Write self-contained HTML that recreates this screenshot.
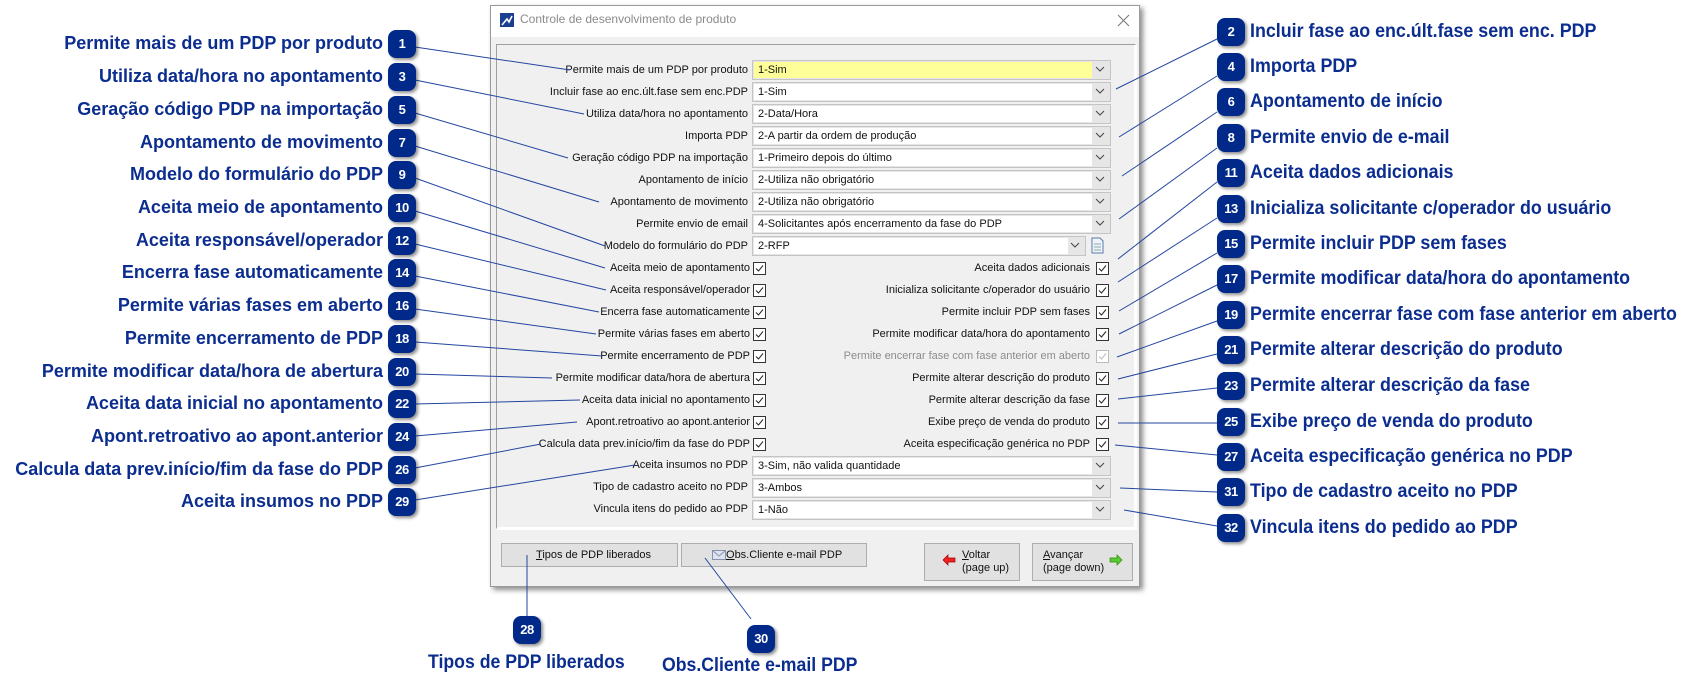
<!DOCTYPE html>
<html><head><meta charset="utf-8"><style>
*{margin:0;padding:0;box-sizing:border-box}
body{width:1706px;height:694px;background:#fff;position:relative;overflow:hidden;font-family:"Liberation Sans",sans-serif}
.a{position:absolute}
.dlg{left:490px;top:5px;width:650px;height:582px;background:#f0f0f0;border:1px solid #9a9a9a;box-shadow:3px 3px 5px rgba(0,0,0,.45)}
.tb{left:491px;top:6px;width:648px;height:31px;background:#fff}
.pn{left:496px;top:44px;width:640px;height:485px;border:1px solid #a0a0a0;border-right-color:#fff;border-bottom-color:#fff;box-shadow:inset -1px -1px 0 #fff, 1px 1px 0 #fff}
.l{position:absolute;right:958px;font-size:11px;color:#111;white-space:nowrap;line-height:14px}
.r{position:absolute;right:616px;font-size:11px;color:#111;white-space:nowrap;line-height:14px}
.cb{position:absolute;left:752px;width:359px;height:20px;background:#e6e6e6;border:1px solid #c4c4c4}
.cb .f{position:absolute;left:1px;top:1px;width:338px;height:16px;background:#fff;font-size:11px;line-height:16px;padding-left:4px;color:#111;white-space:nowrap}
.cb .ar{position:absolute;right:5px;top:3px;width:10px;height:10px}
.bd{position:absolute;width:28px;height:28px;border-radius:8px;background:#00298a;color:#fff;font-weight:bold;font-size:13px;line-height:28px;text-align:center;box-shadow:2px 2px 3px rgba(0,0,0,.45);font-family:"Liberation Sans Narrow","Liberation Sans",sans-serif;letter-spacing:-.5px}
.lt{position:absolute;right:1323px;font-weight:bold;font-size:18px;color:#0b2d8f;white-space:nowrap;line-height:20px}
.rt{position:absolute;left:1250px;font-weight:bold;font-size:19px;color:#0b2d8f;white-space:nowrap;line-height:22px;transform:scaleX(.94);transform-origin:left center}
.bt{position:absolute;background:#e1e1e1;border:1px solid #adadad;font-size:11px;color:#111}
</style></head><body>

<div class="a dlg"></div>
<div class="a tb"></div>
<svg class="a" style="left:500px;top:13px" width="14" height="14"><rect width="14" height="14" fill="#1b3f8f"/><path d="M2 12 L7 6 L9 9 L12 3" stroke="#fff" stroke-width="1.6" fill="none"/></svg>
<div class="a" style="left:520px;top:12px;font-size:12px;color:#8a8a8a">Controle de desenvolvimento de produto</div>
<svg class="a" style="left:1117px;top:14px" width="13" height="13"><path d="M1 1L12 12M12 1L1 12" stroke="#777" stroke-width="1"/></svg>
<div class="a pn"></div>

<div class="l" style="top:63px">Permite mais de um PDP por produto</div>
<div class="cb" style="top:60px"><div class="f" style="background:#ffff99">1-Sim</div><svg class="ar" viewBox="0 0 10 10"><path d="M1 3L5 7L9 3" stroke="#444" fill="none"/></svg></div>
<div class="l" style="top:85px">Incluir fase ao enc.últ.fase sem enc.PDP</div>
<div class="cb" style="top:82px"><div class="f">1-Sim</div><svg class="ar" viewBox="0 0 10 10"><path d="M1 3L5 7L9 3" stroke="#444" fill="none"/></svg></div>
<div class="l" style="top:107px">Utiliza data/hora no apontamento</div>
<div class="cb" style="top:104px"><div class="f">2-Data/Hora</div><svg class="ar" viewBox="0 0 10 10"><path d="M1 3L5 7L9 3" stroke="#444" fill="none"/></svg></div>
<div class="l" style="top:129px">Importa PDP</div>
<div class="cb" style="top:126px"><div class="f">2-A partir da ordem de produção</div><svg class="ar" viewBox="0 0 10 10"><path d="M1 3L5 7L9 3" stroke="#444" fill="none"/></svg></div>
<div class="l" style="top:151px">Geração código PDP na importação</div>
<div class="cb" style="top:148px"><div class="f">1-Primeiro depois do último</div><svg class="ar" viewBox="0 0 10 10"><path d="M1 3L5 7L9 3" stroke="#444" fill="none"/></svg></div>
<div class="l" style="top:173px">Apontamento de início</div>
<div class="cb" style="top:170px"><div class="f">2-Utiliza não obrigatório</div><svg class="ar" viewBox="0 0 10 10"><path d="M1 3L5 7L9 3" stroke="#444" fill="none"/></svg></div>
<div class="l" style="top:195px">Apontamento de movimento</div>
<div class="cb" style="top:192px"><div class="f">2-Utiliza não obrigatório</div><svg class="ar" viewBox="0 0 10 10"><path d="M1 3L5 7L9 3" stroke="#444" fill="none"/></svg></div>
<div class="l" style="top:217px">Permite envio de email</div>
<div class="cb" style="top:214px"><div class="f">4-Solicitantes após encerramento da fase do PDP</div><svg class="ar" viewBox="0 0 10 10"><path d="M1 3L5 7L9 3" stroke="#444" fill="none"/></svg></div>
<div class="l" style="top:239px">Modelo do formulário do PDP</div>
<div class="cb" style="top:236px;width:334px"><div class="f" style="width:314px">2-RFP</div><svg class="ar" viewBox="0 0 10 10"><path d="M1 3L5 7L9 3" stroke="#444" fill="none"/></svg></div>
<svg class="a" style="left:1091px;top:237px" width="13" height="17"><path d="M1 1H9L12 4V16H1Z" fill="#eef3fb" stroke="#5a7aa8"/><path d="M3 7H10M3 10H10M3 13H10" stroke="#8aa"/></svg>

<div class="l" style="top:261px;right:956px">Aceita meio de apontamento</div>
<div class="l" style="top:283px;right:956px">Aceita responsável/operador</div>
<div class="l" style="top:305px;right:956px">Encerra fase automaticamente</div>
<div class="l" style="top:327px;right:956px">Permite várias fases em aberto</div>
<div class="l" style="top:349px;right:956px">Permite encerramento de PDP</div>
<div class="l" style="top:371px;right:956px">Permite modificar data/hora de abertura</div>
<div class="l" style="top:393px;right:956px">Aceita data inicial no apontamento</div>
<div class="l" style="top:415px;right:956px">Apont.retroativo ao apont.anterior</div>
<div class="l" style="top:437px;right:956px">Calcula data prev.início/fim da fase do PDP</div>

<div class="r" style="top:261px">Aceita dados adicionais</div>
<div class="r" style="top:283px">Inicializa solicitante c/operador do usuário</div>
<div class="r" style="top:305px">Permite incluir PDP sem fases</div>
<div class="r" style="top:327px">Permite modificar data/hora do apontamento</div>
<div class="r" style="top:349px;color:#8c8c8c">Permite encerrar fase com fase anterior em aberto</div>
<div class="r" style="top:371px">Permite alterar descrição do produto</div>
<div class="r" style="top:393px">Permite alterar descrição da fase</div>
<div class="r" style="top:415px">Exibe preço de venda do produto</div>
<div class="r" style="top:437px">Aceita especificação genérica no PDP</div>

<svg class="a" style="left:0;top:0" width="1706" height="694">
<defs><g id="k"><rect x="0.5" y="0.5" width="12" height="12" fill="#fff" stroke="#333"/><path d="M3 6.5L5.5 9L10 3.5" stroke="#222" fill="none" stroke-width="1"/></g>
<g id="kd"><rect x="0.5" y="0.5" width="12" height="12" fill="#fff" stroke="#bbb"/><path d="M3 6.5L5.5 9L10 3.5" stroke="#bbb" fill="none"/></g></defs>
<use href="#k" x="753" y="262"/><use href="#k" x="753" y="284"/><use href="#k" x="753" y="306"/><use href="#k" x="753" y="328"/><use href="#k" x="753" y="350"/><use href="#k" x="753" y="372"/><use href="#k" x="753" y="394"/><use href="#k" x="753" y="416"/><use href="#k" x="753" y="438"/>
<use href="#k" x="1096" y="262"/><use href="#k" x="1096" y="284"/><use href="#k" x="1096" y="306"/><use href="#k" x="1096" y="328"/><use href="#kd" x="1096" y="350"/><use href="#k" x="1096" y="372"/><use href="#k" x="1096" y="394"/><use href="#k" x="1096" y="416"/><use href="#k" x="1096" y="438"/>
</svg>

<div class="l" style="top:458px">Aceita insumos no PDP</div>
<div class="cb" style="top:456px"><div class="f">3-Sim, não valida quantidade</div><svg class="ar" viewBox="0 0 10 10"><path d="M1 3L5 7L9 3" stroke="#444" fill="none"/></svg></div>
<div class="l" style="top:480px">Tipo de cadastro aceito no PDP</div>
<div class="cb" style="top:478px"><div class="f">3-Ambos</div><svg class="ar" viewBox="0 0 10 10"><path d="M1 3L5 7L9 3" stroke="#444" fill="none"/></svg></div>
<div class="l" style="top:502px">Vincula itens do pedido ao PDP</div>
<div class="cb" style="top:500px"><div class="f">1-Não</div><svg class="ar" viewBox="0 0 10 10"><path d="M1 3L5 7L9 3" stroke="#444" fill="none"/></svg></div>

<div class="bt" style="left:501px;top:543px;width:177px;height:24px;line-height:22px;padding-left:34px"><u>T</u>ipos de PDP liberados</div>
<div class="bt" style="left:681px;top:543px;width:186px;height:24px;line-height:22px;padding-left:44px"><u>O</u>bs.Cliente e-mail PDP</div>
<svg class="a" style="left:712px;top:548px" width="14" height="13"><rect x="0.5" y="2.5" width="13" height="9" fill="#dfe3f0" stroke="#8a90b0"/><path d="M1 3L7 8L13 3" stroke="#8a90b0" fill="none"/></svg>
<div class="bt" style="left:924px;top:543px;width:96px;height:38px;font-size:11px;line-height:13px;padding:5px 0 0 37px"><u>V</u>oltar<br>(page up)</div>
<svg class="a" style="left:942px;top:554px" width="14" height="12"><path d="M1 6L6 1V4H13V8H6V11Z" fill="#e22" stroke="#a00" stroke-width=".7"/></svg>
<div class="bt" style="left:1032px;top:543px;width:101px;height:38px;font-size:11px;line-height:13px;padding:5px 0 0 10px"><u>A</u>vançar<br>(page down)</div>
<svg class="a" style="left:1109px;top:554px" width="14" height="12"><path d="M13 6L8 1V4H1V8H8V11Z" fill="#5c3" stroke="#380" stroke-width=".7"/></svg>

<svg class="a" style="left:0;top:0" width="1706" height="694">
<g stroke="#2346a0" stroke-width="1" fill="none">
<path d="M415 47L570 70"/><path d="M415 80L584 114"/><path d="M415 113L568 158"/><path d="M415 146L599 202"/><path d="M415 178L605 246"/><path d="M415 211L605 268"/><path d="M415 244L606 290"/><path d="M415 276L599 312"/><path d="M415 309L596 334"/><path d="M415 342L602 356"/><path d="M415 374L552 378"/><path d="M415 404L580 400"/><path d="M415 436L577 422"/><path d="M415 468L541 444"/><path d="M415 500L635 465"/>
<path d="M1116 89L1217 39"/><path d="M1119 137L1217 76"/><path d="M1122 176L1217 112"/><path d="M1119 219L1217 148"/><path d="M1118 259L1217 182"/><path d="M1118 282L1217 218"/><path d="M1119 311L1217 253"/><path d="M1119 334L1217 285"/><path d="M1117 357L1217 321"/><path d="M1118 379L1217 354"/><path d="M1118 399L1217 388"/><path d="M1118 423L1217 423"/><path d="M1115 445L1217 455"/><path d="M1120 488L1217 492"/><path d="M1124 510L1217 526"/>
<path d="M527 555V617"/><path d="M705 558L751 619"/>
</g></svg>

<div class="lt" style="top:33px">Permite mais de um PDP por produto</div><div class="bd" style="left:388px;top:30px">1</div>
<div class="lt" style="top:66px">Utiliza data/hora no apontamento</div><div class="bd" style="left:388px;top:63px">3</div>
<div class="lt" style="top:99px">Geração código PDP na importação</div><div class="bd" style="left:388px;top:96px">5</div>
<div class="lt" style="top:132px">Apontamento de movimento</div><div class="bd" style="left:388px;top:129px">7</div>
<div class="lt" style="top:164px">Modelo do formulário do PDP</div><div class="bd" style="left:388px;top:161px">9</div>
<div class="lt" style="top:197px">Aceita meio de apontamento</div><div class="bd" style="left:388px;top:194px">10</div>
<div class="lt" style="top:230px">Aceita responsável/operador</div><div class="bd" style="left:388px;top:227px">12</div>
<div class="lt" style="top:262px">Encerra fase automaticamente</div><div class="bd" style="left:388px;top:259px">14</div>
<div class="lt" style="top:295px">Permite várias fases em aberto</div><div class="bd" style="left:388px;top:292px">16</div>
<div class="lt" style="top:328px">Permite encerramento de PDP</div><div class="bd" style="left:388px;top:325px">18</div>
<div class="lt" style="top:361px">Permite modificar data/hora de abertura</div><div class="bd" style="left:388px;top:358px">20</div>
<div class="lt" style="top:393px">Aceita data inicial no apontamento</div><div class="bd" style="left:388px;top:390px">22</div>
<div class="lt" style="top:426px">Apont.retroativo ao apont.anterior</div><div class="bd" style="left:388px;top:423px">24</div>
<div class="lt" style="top:459px">Calcula data prev.início/fim da fase do PDP</div><div class="bd" style="left:388px;top:456px">26</div>
<div class="lt" style="top:491px">Aceita insumos no PDP</div><div class="bd" style="left:388px;top:488px">29</div>

<div class="bd" style="left:1217px;top:18px">2</div><div class="rt" style="top:21px">Incluir fase ao enc.últ.fase sem enc. PDP</div>
<div class="bd" style="left:1217px;top:53px">4</div><div class="rt" style="top:56px">Importa PDP</div>
<div class="bd" style="left:1217px;top:88px">6</div><div class="rt" style="top:91px">Apontamento de início</div>
<div class="bd" style="left:1217px;top:124px">8</div><div class="rt" style="top:127px">Permite envio de e-mail</div>
<div class="bd" style="left:1217px;top:159px">11</div><div class="rt" style="top:162px">Aceita dados adicionais</div>
<div class="bd" style="left:1217px;top:195px">13</div><div class="rt" style="top:198px">Inicializa solicitante c/operador do usuário</div>
<div class="bd" style="left:1217px;top:230px">15</div><div class="rt" style="top:233px">Permite incluir PDP sem fases</div>
<div class="bd" style="left:1217px;top:265px">17</div><div class="rt" style="top:268px">Permite modificar data/hora do apontamento</div>
<div class="bd" style="left:1217px;top:301px">19</div><div class="rt" style="top:304px">Permite encerrar fase com fase anterior em aberto</div>
<div class="bd" style="left:1217px;top:336px">21</div><div class="rt" style="top:339px">Permite alterar descrição do produto</div>
<div class="bd" style="left:1217px;top:372px">23</div><div class="rt" style="top:375px">Permite alterar descrição da fase</div>
<div class="bd" style="left:1217px;top:408px">25</div><div class="rt" style="top:411px">Exibe preço de venda do produto</div>
<div class="bd" style="left:1217px;top:443px">27</div><div class="rt" style="top:446px">Aceita especificação genérica no PDP</div>
<div class="bd" style="left:1217px;top:478px">31</div><div class="rt" style="top:481px">Tipo de cadastro aceito no PDP</div>
<div class="bd" style="left:1217px;top:514px">32</div><div class="rt" style="top:517px">Vincula itens do pedido ao PDP</div>

<div class="bd" style="left:513px;top:616px">28</div>
<div class="rt" style="left:428px;top:652px;transform:scaleX(.93)">Tipos de PDP liberados</div>
<div class="bd" style="left:747px;top:625px">30</div>
<div class="rt" style="left:662px;top:655px;transform:scaleX(.93)">Obs.Cliente e-mail PDP</div>
</body></html>
